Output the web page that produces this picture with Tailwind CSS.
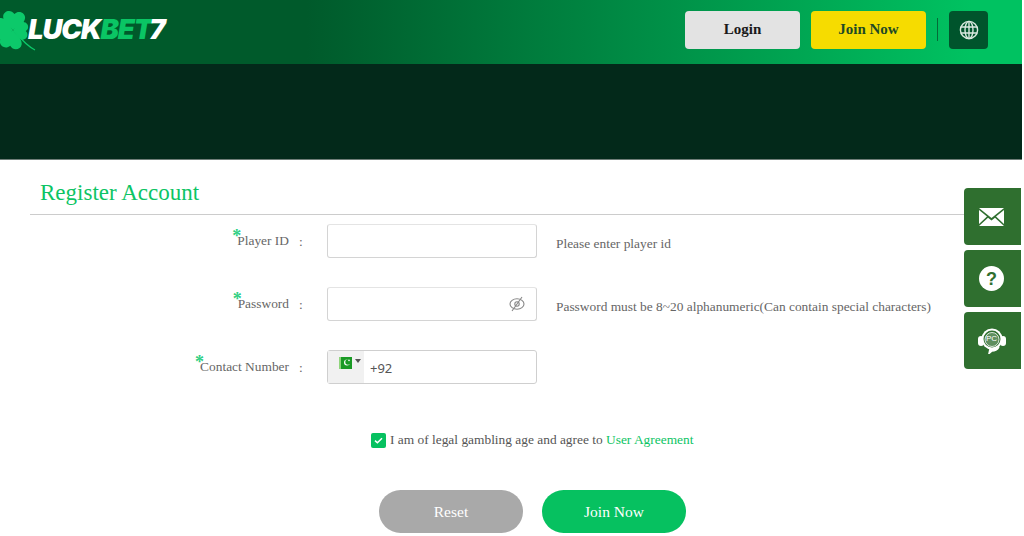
<!DOCTYPE html>
<html>
<head>
<meta charset="utf-8">
<script src="https://cdn.jsdelivr.net/npm/@tailwindcss/browser@4"></script>
</head>
<body class="bg-white font-['Liberation_Serif',serif] overflow-hidden">
<div class="relative w-[1024px] h-[536px] overflow-hidden">
  <header class="h-16 w-[1022px] flex items-center bg-linear-to-r from-[#005a2b] from-30% to-[#00c261] to-95%">
    <div class="flex items-center w-[170px] h-16 overflow-hidden">
      <svg class="shrink-0" width="36" height="64" viewBox="0 0 36 64">
        <defs>
          <radialGradient id="clover" gradientUnits="userSpaceOnUse" cx="13" cy="30" r="9">
            <stop offset="0" stop-color="#1c7f66"/>
            <stop offset="1" stop-color="#0cc96a"/>
          </radialGradient>
        </defs>
        <g fill="url(#clover)">
          <path transform="translate(13 30) rotate(5)" d="M0 0C-4 -4 -11 -7 -11 -13C-11 -18 -4 -21 0 -16C4 -21 11 -18 11 -13C11 -7 4 -4 0 0Z"/>
          <path transform="translate(13 30) rotate(95) scale(0.8)" d="M0 0C-4 -4 -11 -7 -11 -13C-11 -18 -4 -21 0 -16C4 -21 11 -18 11 -13C11 -7 4 -4 0 0Z"/>
          <path transform="translate(13 30) rotate(190)" d="M0 0C-4 -4 -11 -7 -11 -13C-11 -18 -4 -21 0 -16C4 -21 11 -18 11 -13C11 -7 4 -4 0 0Z"/>
          <path transform="translate(13 30) rotate(275)" d="M0 0C-4 -4 -11 -7 -11 -13C-11 -18 -4 -21 0 -16C4 -21 11 -18 11 -13C11 -7 4 -4 0 0Z"/>
        </g>
        <path d="M14 31C20 38 27 46 35 50" stroke="#0cc96a" stroke-width="1.2" fill="none"/>
      </svg>
      <div class="-ml-[8px] -mt-[5px] font-['Inter',sans-serif] italic font-black text-[27.5px] leading-none tracking-[-1.1px] text-white whitespace-nowrap">LUCK<span class="text-[#0ac564]">BET</span>7</div>
    </div>
    <div class="ml-auto flex items-center mr-[34px] mb-[5px]">
      <button class="w-[115px] h-[38px] rounded bg-[#e3e3e3] font-bold text-[15px] text-[#1a1a1a]">Login</button>
      <button class="ml-[11px] w-[115px] h-[38px] rounded bg-[#f6dc00] font-bold text-[15px] text-[#1f4a26]">Join Now</button>
      <span class="ml-[11px] w-px h-[23px] bg-[#056b38]"></span>
      <button class="ml-[11px] w-[39px] h-[38px] rounded bg-[#00542c] flex items-center justify-center">
        <svg width="20" height="20" viewBox="0 0 20 20" fill="none" stroke="#d9e8df" stroke-width="1.4">
          <circle cx="10" cy="10" r="8.6"/><ellipse cx="10" cy="10" rx="4" ry="8.6"/><path d="M10 1.4V18.6M1.8 7H18.2M1.8 13H18.2"/>
        </svg>
      </button>
    </div>
  </header>
  <div class="h-24 w-[1022px] bg-[#03291a] border-b border-[#6f7d78]"></div>

  <main class="px-[30px]">
    <h1 class="h-[55px] pl-[10px] pt-[18px] border-b border-[#cccccc] text-[23px] leading-[29px] text-[#0cc464]">Register Account</h1>
    <div class="mt-[9px] flex flex-col gap-[29px]">
      <div class="flex items-center h-[34px]">
        <label class="w-[259px] text-right text-[13.4px] text-[#666666] leading-none"><span class="relative"><span class="absolute -left-[5px] -top-[6px] text-[#2fcf83] text-lg font-bold leading-none">*</span>Player ID</span></label>
        <span class="w-[38px] pl-[10px] pt-[2px] text-[13.4px] text-[#666666]">:</span>
        <div class="w-[210px] h-[34px] border border-[#d4d4d4] border-t-[#e4e4e4] rounded-[3px]"></div>
        <span class="ml-[19px] text-[13.4px] text-[#666666] mt-[7px]">Please enter player id</span>
      </div>
      <div class="flex items-center h-[34px]">
        <label class="w-[259px] text-right text-[13.4px] text-[#666666] leading-none"><span class="relative"><span class="absolute -left-[5px] -top-[6px] text-[#2fcf83] text-lg font-bold leading-none">*</span>Password</span></label>
        <span class="w-[38px] pl-[10px] pt-[2px] text-[13.4px] text-[#666666]">:</span>
        <div class="w-[210px] h-[34px] border border-[#d4d4d4] border-t-[#e4e4e4] rounded-[3px] flex items-center justify-end pr-[11px]">
          <svg width="16" height="16" viewBox="0 0 16 16" fill="none" stroke="#888888" stroke-width="1.1">
            <ellipse cx="8" cy="8" rx="7" ry="5.2"/><circle cx="8" cy="8" r="2.2"/><path d="M13 1L3 15"/>
          </svg>
        </div>
        <span class="ml-[19px] text-[13.4px] text-[#666666] mt-[7px] whitespace-nowrap">Password must be 8~20 alphanumeric(Can contain special characters)</span>
      </div>
      <div class="flex items-center h-[34px]">
        <label class="w-[259px] text-right text-[13.4px] text-[#666666] leading-none"><span class="relative"><span class="absolute -left-[5px] -top-[6px] text-[#2fcf83] text-lg font-bold leading-none">*</span>Contact Number</span></label>
        <span class="w-[38px] pl-[10px] pt-[2px] text-[13.4px] text-[#666666]">:</span>
        <div class="w-[210px] h-[34px] border border-[#cfcfcf] rounded-[3px] flex items-stretch">
          <div class="w-[36px] bg-[#f1f1f1] pl-[11px] pt-[6px] flex items-start gap-[3px]">
            <svg width="13" height="12" viewBox="0 0 13 12">
              <rect width="13" height="12" fill="#1a9a25"/><rect width="2" height="12" fill="#8fd47c"/>
              <circle cx="8" cy="5.6" r="3" fill="#fff"/><circle cx="9" cy="5" r="2.7" fill="#1a9a25"/><circle cx="10" cy="3.4" r="0.8" fill="#fff"/>
            </svg>
            <span class="mt-[2px] w-0 h-0 border-x-[3px] border-x-transparent border-t-[4px] border-t-[#555555]"></span>
          </div>
          <span class="pl-[6px] pt-[3px] self-center font-['Noto_Sans',sans-serif] text-[13px] text-[#555555]">+92</span>
        </div>
      </div>
    </div>
    <div class="mt-[47px] ml-[341px] flex items-center h-[18px]">
      <span class="w-[15px] h-[15px] rounded-[2px] bg-[#06c160] flex items-center justify-center">
        <svg width="9" height="7" viewBox="0 0 9 7" fill="none" stroke="#ffffff" stroke-width="1.5"><path d="M1 3.6L3.4 5.8L8 1.2"/></svg>
      </span>
      <span class="ml-[4px] text-[13.4px] text-[#555555] whitespace-nowrap">I am of legal gambling age and agree to <span class="text-[#0cc464]">User Agreement</span></span>
    </div>
    <div class="mt-[41px] ml-[349px] flex gap-[19px]">
      <button class="w-[144px] h-[43px] rounded-full bg-[#a9a9a9] text-white text-[15.5px]">Reset</button>
      <button class="w-[144px] h-[43px] rounded-full bg-[#06c160] text-white text-[15.5px]">Join Now</button>
    </div>
  </main>

  <aside class="absolute left-[964px] top-[188px] flex flex-col gap-[5px]">
    <div class="w-[57px] h-[57px] rounded-l bg-[#2f6f2f] flex items-center justify-center pr-[2px]">
      <svg width="25" height="18" viewBox="0 0 25 18"><path d="M0 0H25L12.5 10Z" fill="#fff"/><path d="M0 2L8 8.6L0 16ZM25 2L17 8.6L25 16Z" fill="#fff"/><path d="M0 18L9 9.8L12.5 12.5L16 9.8L25 18Z" fill="#fff"/></svg>
    </div>
    <div class="w-[57px] h-[57px] rounded-l bg-[#2f6f2f] flex items-center justify-center pr-[2px]">
      <span class="w-[25px] h-[25px] rounded-full bg-white flex items-center justify-center font-['Liberation_Sans',sans-serif] font-bold text-[18px] leading-none text-[#2f6f2f]">?</span>
    </div>
    <div class="w-[57px] h-[57px] rounded-l bg-[#2f6f2f] flex items-center justify-center pr-[2px]">
      <span class="relative w-[30px] h-[26px] flex items-center justify-center">
        <svg class="absolute inset-0" width="30" height="26" viewBox="0 0 30 26" fill="none">
          <rect x="1" y="8" width="6" height="10" rx="3" fill="#fff"/><rect x="23" y="8" width="6" height="10" rx="3" fill="#fff"/>
          <circle cx="15" cy="11" r="10.5" fill="#fff"/><circle cx="15" cy="11" r="8.5" fill="#2f6f2f"/><circle cx="15" cy="11.5" r="7" fill="#5f8f5f" stroke="#fff" stroke-width="0.8"/>
          <path d="M22 19C20 22 18 23 15 23L12 25.5L13 21" fill="#fff" stroke="#fff" stroke-width="1.5"/>
        </svg>
        <span class="relative -mt-[3px] font-['Liberation_Sans',sans-serif] text-[8px] leading-none text-white">PC</span>
      </span>
    </div>
  </aside>
</div>
</body>
</html>
